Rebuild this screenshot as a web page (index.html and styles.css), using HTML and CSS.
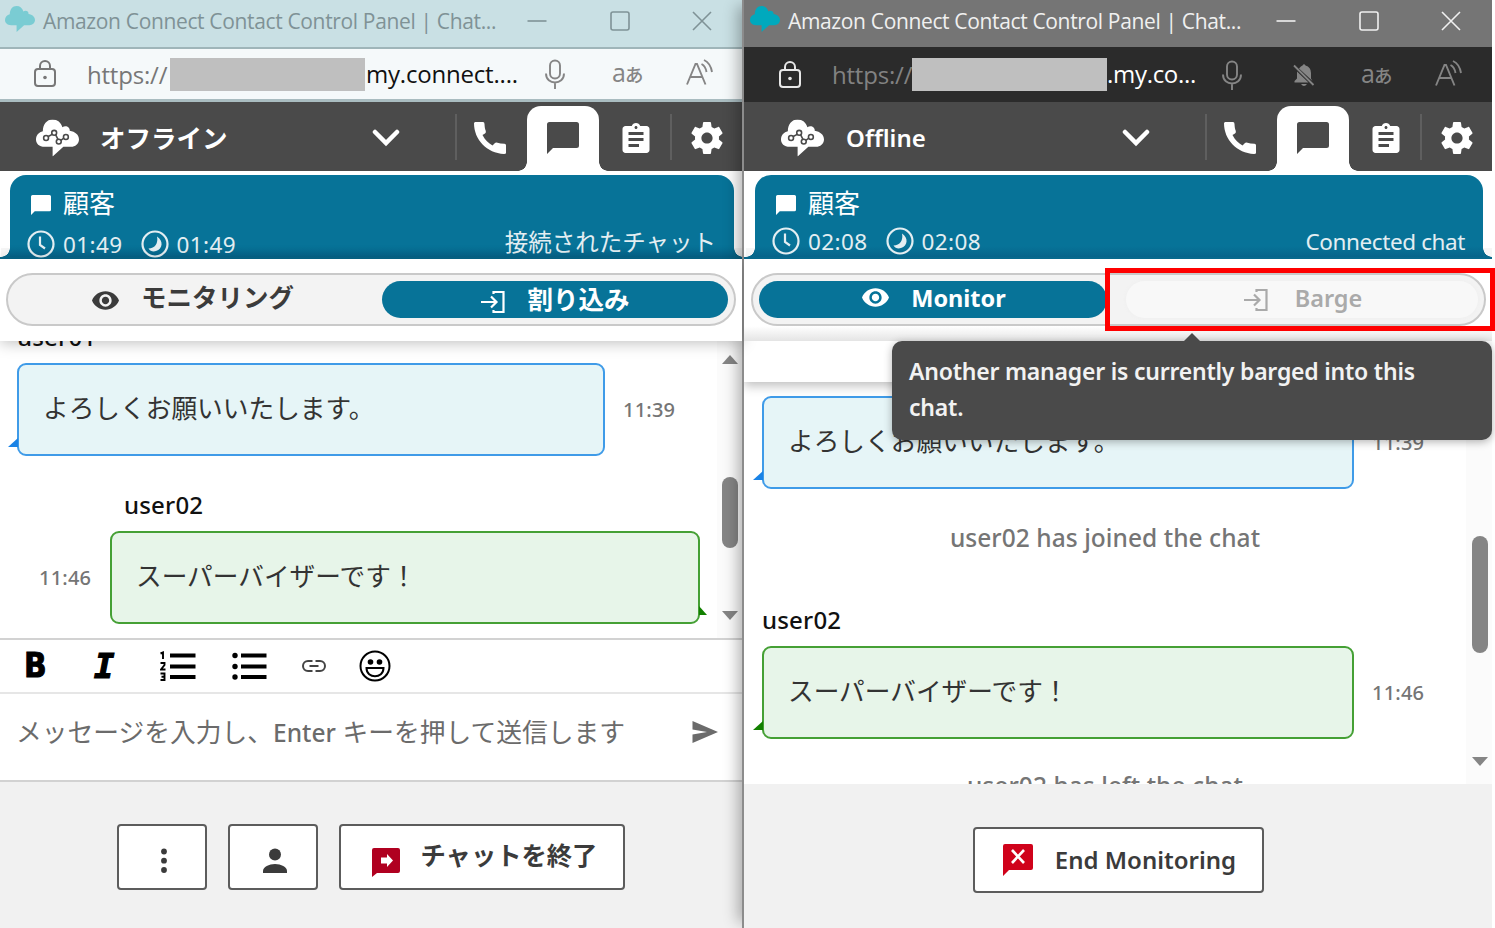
FILE: index.html
```html
<!DOCTYPE html>
<html lang="ja">

<head>
	<meta charset="UTF-8">
	<meta name="viewport" content="width=device-width, initial-scale=1.0">
	<title>Amazon Connect Contact Control Panel</title>
	<link rel="stylesheet" href="styles.css">
</head>

<body>
	<svg class="sprite" width="0" height="0">
		<symbol id="cloud" viewBox="0 0 44 38"><path d="M9 28C3 28 0 24.500 0 20.500C0 16 3 13 7 12C7 5 11 0 17 0C22 0 25.500 3 27 8C30 5.500 35 7.500 34.500 11.500C40 12.500 44 15.500 44 20.500C44 25 40 28 36 28H28L17 38V28Z"/></symbol>
		<symbol id="lock" viewBox="0 0 24 30"><g fill="none" stroke="currentColor" stroke-width="2"><rect x="2" y="10" width="20" height="17" rx="3"/><path d="M7 10V7a5 5 0 0 1 10 0v3"/></g><circle cx="12" cy="18.500" r="1.800"/></symbol>
		<symbol id="mic" viewBox="0 0 22 30"><g fill="none" stroke="currentColor" stroke-width="1.900"><rect x="6" y="1.500" width="10" height="18" rx="5"/><path d="M2 14.500c0 12 18 12 18 0M11 24v6"/></g></symbol>
		<symbol id="belloff" viewBox="0 0 22 24"><path d="M6 5.500Q8 3 9.500 2.500Q11 0 12.500 2.500Q18 4 18 10v5.500L19.500 18zM4 8.500L15.500 19.500H1.500V18L4 15.500zM8 21h6q-3 4-6 0z"/><path d="M1 2.500L20.500 22" stroke="currentColor" stroke-width="1.800"/></symbol>
		<symbol id="read" viewBox="0 0 28 26"><g fill="none" stroke="currentColor" stroke-width="1.900"><path d="M1 25.500L9.500 5h1.500L19.500 25.500M4.500 18H16M15.500 5q4 2 5 8M18 1q6.500 3 8 12"/></g></symbol>
		<symbol id="min" viewBox="0 0 20 20"><path d="M.500 10h19" stroke="currentColor" stroke-width="1.600"/></symbol>
		<symbol id="max" viewBox="0 0 20 20"><rect x="1" y="1" width="18" height="18" rx="2" fill="none" stroke="currentColor" stroke-width="1.600"/></symbol>
		<symbol id="close" viewBox="0 0 20 20"><path d="M1 1l18 18M19 1L1 19" stroke="currentColor" stroke-width="1.600"/></symbol>
		<symbol id="down" viewBox="0 0 28 18"><path d="M3 3l11 11L25 3" fill="none" stroke="currentColor" stroke-width="4.500" stroke-linecap="round"/></symbol>
		<symbol id="phone" viewBox="0 0 32 32"><path d="M1 0H9Q10.500 0 10.500 2C10.600 5 11 7 11.800 9Q12.200 10.500 11 11.500L8.500 13C11 18 14.500 21 18.500 23.500L21 21Q22 20 23.500 20.800Q26 21.600 30.500 21.700Q32 21.700 32 23.200V31Q32 32 30 32C13 31 0 18 0 1Z"/></symbol>
		<symbol id="chat" viewBox="0 0 32 32"><path d="M2.500 0h27Q32 0 32 2.500v21Q32 26 29.500 26H6L0 32V2.500Q0 0 2.500 0z"/></symbol>
		<symbol id="clip" viewBox="3 1 18 20"><path d="M19 3h-4.180C14.400 1.840 13.300 1 12 1c-1.300 0-2.400.840-2.820 2H5c-1.100 0-2 .900-2 2v14c0 1.100.900 2 2 2h14c1.100 0 2-.900 2-2V5c0-1.100-.900-2-2-2zm-7 0c.550 0 1 .450 1 1s-.450 1-1 1-1-.450-1-1 .450-1 1-1zm2 14H7v-2h7v2zm3-4H7v-2h10v2zm0-4H7V7h10v2z"/></symbol>
		<symbol id="gear" viewBox="2 2 20 20"><path d="M19.430 12.980c.040-.320.070-.640.070-.980s-.030-.660-.070-.980l2.110-1.650c.190-.150.240-.420.120-.640l-2-3.460c-.120-.220-.390-.300-.610-.220l-2.490 1c-.520-.400-1.080-.730-1.690-.980l-.380-2.650C14.460 2.180 14.250 2 14 2h-4c-.250 0-.460.180-.490.420l-.380 2.650c-.610.250-1.170.590-1.690.980l-2.490-1c-.230-.090-.490 0-.610.220l-2 3.460c-.130.220-.070.490.120.640l2.110 1.650c-.040.320-.070.650-.070.980s.030.660.070.980l-2.110 1.650c-.190.150-.240.420-.120.640l2 3.460c.120.220.390.300.610.220l2.490-1c.520.400 1.080.730 1.690.980l.380 2.650c.030.240.240.420.490.420h4c.250 0 .460-.180.490-.420l.380-2.650c.610-.250 1.170-.590 1.690-.980l2.490 1c.230.090.490 0 .610-.220l2-3.460c.120-.220.070-.490-.120-.640l-2.110-1.650zM12 15.500c-1.930 0-3.500-1.570-3.500-3.500s1.570-3.500 3.500-3.500 3.500 1.570 3.500 3.500-1.570 3.500-3.500 3.500z"/></symbol>
		<symbol id="clock" viewBox="0 0 28 28"><g fill="none" stroke="currentColor" stroke-width="2.200"><circle cx="14" cy="14" r="12.500"/><path d="M13 6.500V15l5 3.500"/></g></symbol>
		<symbol id="moon" viewBox="0 0 28 28"><circle cx="14" cy="14" r="12.500" fill="none" stroke="currentColor" stroke-width="2.200"/><path d="M16 6.500c6.500 4 6 12.500-1 14.500-3 1-6 0-7.500-2.500C14 18.500 17.500 13 16 6.500z"/></symbol>
		<symbol id="eye" viewBox="1 4.500 22 15"><path d="M12 4.500C7 4.500 2.730 7.610 1 12c1.730 4.390 6 7.500 11 7.500s9.270-3.110 11-7.500c-1.730-4.390-6-7.500-11-7.500zM12 17c-2.760 0-5-2.240-5-5s2.240-5 5-5 5 2.240 5 5-2.240 5-5 5zm0-8c-1.660 0-3 1.340-3 3s1.340 3 3 3 3-1.340 3-3-1.340-3-3-3z"/></symbol>
		<symbol id="barge" viewBox="0 0 24 22"><g fill="none" stroke="currentColor" stroke-width="2.200"><path d="M0 11h15M10 5.500l5.500 5.500-5.500 5.500M12.500 3V1H22.500V21H12.500V19"/></g></symbol>
		<symbol id="ol" viewBox="0 0 36 30"><path d="M10 4.500h25.500M10 15.500h25.500M10 26h25.500" stroke="currentColor" stroke-width="4"/><g fill="none" stroke="currentColor" stroke-width="1.900"><path d="M.500 2.500L3 1.500V8M.500 12h4v2L1 18.500h4.500M.500 22.500h4v6.500H.500M1.500 25.700h3"/></g></symbol>
		<symbol id="ul" viewBox="0 0 36 30"><path d="M9 4.500h25.500M9 15.500h25.500M9 26h25.500" stroke="currentColor" stroke-width="4"/><circle cx="3" cy="4.500" r="2.700"/><circle cx="3" cy="15.500" r="2.700"/><circle cx="3" cy="26" r="2.700"/></symbol>
		<symbol id="link" viewBox="0 0 24 12"><g fill="none" stroke="currentColor" stroke-width="2"><path d="M10.500 1H6a5 5 0 0 0 0 10h4.500M13.500 1H18a5 5 0 0 1 0 10h-4.500M7.500 6h9"/></g></symbol>
		<symbol id="smile" viewBox="0 0 32 32"><circle cx="16" cy="16" r="14.500" fill="none" stroke="currentColor" stroke-width="2"/><circle cx="11.500" cy="12" r="2.800"/><circle cx="20.500" cy="12" r="2.800"/><path d="M7.500 18h17c0 11-17 11-17 0z" fill="none" stroke="currentColor" stroke-width="2"/></symbol>
		<symbol id="send" viewBox="0 0 26 22"><path d="M.500 0L26 11 .500 22V13.500L15 11 .500 8.500z"/></symbol>
		<symbol id="dots" viewBox="0 0 6 26"><circle cx="3" cy="3.500" r="2.900"/><circle cx="3" cy="12.700" r="2.900"/><circle cx="3" cy="22" r="2.900"/></symbol>
		<symbol id="person" viewBox="0 0 24 26"><circle cx="12" cy="6.500" r="6"/><path d="M0 25v-2c0-4 6-7 12-7s12 3 12 7v2z"/></symbol>
		<symbol id="up-arrow" viewBox="0 0 16 9"><path d="M0 9L8 0l8 9z"/></symbol>
		<symbol id="down-arrow" viewBox="0 0 16 9"><path d="M0 0h16L8 9z"/></symbol>
	</svg>

	<div class="screen">
		<!-- supervisor who barged in -->
		<section class="window light">
			<div class="titlebar">
				<svg class="favicon"><use href="#cloud"/></svg>
				<span class="title">Amazon Connect Contact Control Panel | Chat...</span>
				<svg class="win"><use href="#min"/></svg>
				<svg class="win"><use href="#max"/></svg>
				<svg class="win"><use href="#close"/></svg>
			</div>
			<div class="address">
				<svg class="lock"><use href="#lock"/></svg>
				<span class="scheme">https://</span>
				<span class="mask"></span>
				<span class="host">my.connect....</span>
				<div class="tools">
					<svg class="mic"><use href="#mic"/></svg>
					<span class="lang"><span class="latin">a</span>あ</span>
					<svg class="read"><use href="#read"/></svg>
				</div>
			</div>
			<header class="ccp-header">
				<svg class="logo" viewBox="0 0 44 38"><use href="#cloud"/><g fill="none" stroke="#4a4a4a" stroke-width="1.600"><path d="M12.500 17.500l4.500-2.500M20 15.500l2.500 5M25.500 21.500l3-2.500"/><circle cx="10.300" cy="19" r="2.500"/><circle cx="18.600" cy="13.700" r="2.500"/><circle cx="23.300" cy="22.700" r="2.500"/><circle cx="30.600" cy="18" r="2.500"/></g></svg>
				<span class="status jp">オフライン</span>
				<svg class="down"><use href="#down"/></svg>
				<nav class="tabs">
					<a class="tab"><svg class="i32"><use href="#phone"/></svg></a>
					<a class="tab active"><svg class="i32"><use href="#chat"/></svg></a>
					<a class="tab clip"><svg><use href="#clip"/></svg></a>
					<a class="tab gear"><svg class="i32"><use href="#gear"/></svg></a>
				</nav>
			</header>
			<div class="contact">
				<div class="card">
					<div class="customer"><svg><use href="#chat"/></svg>顧客</div>
					<div class="timers">
						<svg><use href="#clock"/></svg><span>01:49</span>
						<svg><use href="#moon"/></svg><span>01:49</span>
						<b class="state">接続されたチャット</b>
					</div>
				</div>
			</div>
			<div class="switchbar">
				<div class="switch">
					<button class="mode"><svg class="eye"><use href="#eye"/></svg>モニタリング</button>
					<button class="mode on"><svg class="enter"><use href="#barge"/></svg>割り込み</button>
				</div>
			</div>
			<div class="chat">
				<div class="messages">
					<div class="name first">user01</div>
					<div class="row">
						<div class="bubble blue">よろしくお願いいたします。</div>
						<span class="time">11:39</span>
					</div>
					<div class="name own">user02</div>
					<div class="row">
						<span class="time">11:46</span>
						<div class="bubble green right">スーパーバイザーです！</div>
					</div>
				</div>
				<div class="scrollbar">
					<svg><use href="#up-arrow"/></svg>
					<i class="thumb"></i>
					<svg><use href="#down-arrow"/></svg>
				</div>
			</div>
			<div class="format">
				<span class="bold">B</span>
				<span class="italic">I</span>
				<svg class="list"><use href="#ol"/></svg>
				<svg class="list"><use href="#ul"/></svg>
				<svg class="link"><use href="#link"/></svg>
				<svg class="smile"><use href="#smile"/></svg>
			</div>
			<div class="composer">
				<span>メッセージを入力し、<span class="key">Enter</span> キーを押して送信します</span>
				<svg><use href="#send"/></svg>
			</div>
			<footer class="actions">
				<button class="btn square"><svg class="dots"><use href="#dots"/></svg></button>
				<button class="btn square"><svg class="person"><use href="#person"/></svg></button>
				<button class="btn end"><svg class="badge" viewBox="0 0 28 29"><path fill="#b00020" d="M2 0h24q2 0 2 2v21q0 2-2 2H5l-5 4V2q0-2 2-2z"/><path fill="#fff" d="M9 9.500h6V6l6 6.500-6 6.500v-3.500H9z"/></svg>チャットを終了</button>
			</footer>
		</section>

		<!-- supervisor who is only monitoring -->
		<section class="window dark">
			<div class="titlebar">
				<svg class="favicon"><use href="#cloud"/></svg>
				<span class="title">Amazon Connect Contact Control Panel | Chat...</span>
				<svg class="win"><use href="#min"/></svg>
				<svg class="win"><use href="#max"/></svg>
				<svg class="win"><use href="#close"/></svg>
			</div>
			<div class="address">
				<svg class="lock"><use href="#lock"/></svg>
				<span class="scheme">https://</span>
				<span class="mask"></span>
				<span class="host">.my.co...</span>
				<div class="tools">
					<svg class="mic"><use href="#mic"/></svg>
					<svg class="bell"><use href="#belloff"/></svg>
					<span class="lang"><span class="latin">a</span>あ</span>
					<svg class="read"><use href="#read"/></svg>
				</div>
			</div>
			<header class="ccp-header">
				<svg class="logo" viewBox="0 0 44 38"><use href="#cloud"/><g fill="none" stroke="#4a4a4a" stroke-width="1.600"><path d="M12.500 17.500l4.500-2.500M20 15.500l2.500 5M25.500 21.500l3-2.500"/><circle cx="10.300" cy="19" r="2.500"/><circle cx="18.600" cy="13.700" r="2.500"/><circle cx="23.300" cy="22.700" r="2.500"/><circle cx="30.600" cy="18" r="2.500"/></g></svg>
				<span class="status">Offline</span>
				<svg class="down"><use href="#down"/></svg>
				<nav class="tabs">
					<a class="tab"><svg class="i32"><use href="#phone"/></svg></a>
					<a class="tab active"><svg class="i32"><use href="#chat"/></svg></a>
					<a class="tab clip"><svg><use href="#clip"/></svg></a>
					<a class="tab gear"><svg class="i32"><use href="#gear"/></svg></a>
				</nav>
			</header>
			<div class="contact">
				<div class="card">
					<div class="customer"><svg><use href="#chat"/></svg>顧客</div>
					<div class="timers">
						<svg><use href="#clock"/></svg><span>02:08</span>
						<svg><use href="#moon"/></svg><span>02:08</span>
						<b class="state">Connected chat</b>
					</div>
				</div>
			</div>
			<div class="switchbar">
				<div class="switch">
					<button class="mode on"><svg class="eye"><use href="#eye"/></svg>Monitor</button>
					<button class="mode off"><svg class="enter"><use href="#barge"/></svg>Barge</button>
				</div>
				<div class="tooltip">Another manager is currently barged into this<br>chat.</div>
				<div class="highlight"></div>
			</div>
			<div class="chat">
				<div class="messages">
					<div class="strip"></div>
					<div class="row">
						<div class="bubble blue">よろしくお願いいたします。</div>
						<span class="time">11:39</span>
					</div>
					<div class="event">user02 has joined the chat</div>
					<div class="name">user02</div>
					<div class="row">
						<div class="bubble green">スーパーバイザーです！</div>
						<span class="time">11:46</span>
					</div>
					<div class="event left">user02 has left the chat</div>
				</div>
				<div class="scrollbar">
					<i class="thumb"></i>
					<svg><use href="#down-arrow"/></svg>
				</div>
			</div>
			<footer class="actions">
				<button class="btn end"><svg class="badge" viewBox="0 0 30 32"><path fill="#d0021b" d="M2 0h26q2 0 2 2v22q0 2-2 2H6l-6 6V2q0-2 2-2z"/><path d="M9 6l12 13M21 6L9 19" stroke="#fff" stroke-width="2.600"/></svg>End Monitoring</button>
			</footer>
		</section>
	</div>
</body>

</html>
```

FILE: styles.css
```css
* {
	box-sizing: border-box;
}

body {
	margin: 0;
	background: #fff;
	font-family: "Noto Sans", "Noto Sans CJK JP", sans-serif;
	overflow: hidden;
}

svg {
	display: block;
	flex: none;
	fill: currentColor;
}

button {
	font-family: inherit;
	margin: 0;
	padding: 0;
	border: none;
}

.sprite {
	position: absolute;
}

.screen {
	display: flex;
	width: 1495px;
	height: 928px;
}

.window {
	display: flex;
	flex-direction: column;
	flex: none;
	height: 928px;
	background: #fff;
	white-space: nowrap;
}

.window.light {
	width: 742px;
}

.window.dark {
	width: 750px;
	border-left: 2px solid #8c8c8c;
	box-shadow: -10px 0 14px -6px rgba(0, 0, 0, 0.3);
	position: relative;
}

/* browser chrome */
.titlebar {
	display: flex;
	align-items: center;
	flex: none;
	height: 49px;
	padding: 0 31px 6px 5px;
	background: #c9e0e4;
	border-bottom: 2px solid #9fb5b9;
	color: #7f9296;
}

.favicon {
	width: 30px;
	height: 26px;
	margin-top: -4px;
	color: #7accd3;
}

.title {
	font-family: "Open Sans", sans-serif;
	font-size: 21px;
	letter-spacing: -0.35px;
	margin-left: 8px;
	width: 484px;
	flex: none;
}

.win {
	width: 20px;
	height: 20px;
	margin-right: 62.500px;
}

.address {
	display: flex;
	align-items: center;
	flex: none;
	height: 53px;
	padding-left: 33px;
	background: #f5f9fa;
	border-bottom: 3px solid #a9bcc0;
	font-family: "Open Sans", sans-serif;
	font-size: 24px;
	color: #777;
}

.lock {
	width: 24px;
	height: 30px;
	margin-right: 30px;
}

.scheme {
	width: 83px;
	flex: none;
	letter-spacing: -0.2px;
}

.mask {
	width: 195px;
	height: 33px;
	flex: none;
	background: #bfbfbf;
}

.host {
	color: #111;
	margin-left: 1px;
	letter-spacing: -0.2px;
	position: relative;
	top: -1px;
}

.tools {
	display: flex;
	align-items: center;
	margin-left: auto;
	padding-right: 28px;
	color: #858585;
}

.mic {
	width: 22px;
	height: 30px;
}

.lang {
	font-family: "Noto Sans CJK JP", sans-serif;
	font-size: 18.500px;
	font-weight: 500;
	margin: 0 43px 0 46px;
	width: 31px;
	display: flex;
	align-items: center;
	line-height: 24px;
	letter-spacing: -1px;
}

.latin {
	font-family: "Open Sans", sans-serif;
	font-size: 25px;
	font-weight: 400;
	margin-top: -4px;
}

.read {
	width: 28px;
	height: 26px;
	margin-top: -4px;
}

.dark .titlebar {
	background: #757575;
	color: #f0f0f0;
	height: 47px;
	padding: 0 31px 5px 6px;
	border-bottom: none;
}

.dark .favicon {
	color: #00a9bd;
}

.dark .title {
	width: 488px;
}

.dark .address {
	background: #2b2b2b;
	height: 55px;
	border-bottom: none;
	padding-left: 34px;
	color: #828282;
}

.dark .lock {
	color: #e8e8e8;
}

.dark .scheme {
	width: 80px;
}

.dark .host {
	color: #fff;
	margin-left: 0;
	letter-spacing: -0.300px;
}

.bell {
	width: 22px;
	height: 24px;
	margin-left: 50px;
}

.dark .tools {
	padding-right: 29px;
}

/* control panel header */
.ccp-header {
	display: flex;
	align-items: center;
	flex: none;
	height: 69px;
	background: #4a4a4a;
	color: #fff;
	padding-left: 36px;
}

.logo {
	width: 43px;
	height: 38px;
	margin-top: 2px;
}

.dark .ccp-header {
	padding-left: 37px;
}

.status {
	font-size: 24px;
	font-weight: 600;
	margin-left: 22px;
	margin-top: 1px;
}

.status.jp {
	font-size: 25.500px;
	font-weight: 700;
	margin-left: 21px;
	margin-top: -1px;
}

.down {
	width: 28px;
	height: 18px;
	margin-left: auto;
	margin-right: 55px;
	margin-top: 3px;
}

.tabs {
	display: flex;
	align-self: stretch;
	align-items: center;
	width: 287px;
	position: relative;
	padding-left: 19px;
}

.tabs::before {
	content: "";
	align-self: center;
	width: 2px;
	height: 46px;
	background: #5f5f5f;
	margin-left: -19px;
	margin-right: 17px;
}

.i32 {
	width: 32px;
	height: 32px;
}

.tab {
	padding-top: 2px;
}

.tab.active {
	align-self: flex-end;
	display: flex;
	justify-content: center;
	width: 72px;
	height: 65px;
	margin-left: 21px;
	padding-top: 16px;
	border-radius: 14px 14px 0 0;
	background: #fff;
	color: #4a4a4a;
	position: relative;
}

.tab.active::before,
.tab.active::after {
	content: "";
	position: absolute;
	bottom: 0;
	left: -9px;
	width: 9px;
	height: 9px;
	background: radial-gradient(circle at 0 0, #4a4a4a 8.500px, #fff 9px);
}

.tab.active::after {
	left: auto;
	right: -9px;
	background: radial-gradient(circle at 100% 0, #4a4a4a 8.500px, #fff 9px);
}

.tab.clip {
	margin-left: 23px;
}

.tab.clip svg {
	width: 28px;
	height: 30px;
}

.tab.gear {
	border-left: 2px solid #5f5f5f;
	margin-left: 20px;
	padding: 8px 0 6px 19px;
}

/* contact card */
.contact {
	flex: none;
	height: 88px;
	padding: 4px 8px 0 10px;
	border-bottom: 2px solid #07698d;
}

.dark .contact {
	padding: 4px 9px 0 11px;
}

.card {
	height: 82px;
	padding: 12px 18px 0 17px;
	border-radius: 16px 16px 0 0;
	background: linear-gradient(#077398 87%, #06648a);
	color: #fff;
	position: relative;
}

.card::before,
.card::after {
	content: "";
	position: absolute;
	bottom: 0;
	left: -9px;
	width: 9px;
	height: 9px;
	background: radial-gradient(circle at 0 0, #f6f6f6 8.500px, #07698d 9px);
}

.card::after {
	left: auto;
	right: -9px;
	background: radial-gradient(circle at 100% 0, #f6f6f6 8.500px, #07698d 9px);
}

.customer {
	display: flex;
	align-items: center;
	height: 32px;
	font-size: 26px;
	line-height: 32px;
}

.customer svg {
	width: 20px;
	height: 20px;
	margin: 4px 12px 0 4px;
}

.timers {
	display: flex;
	align-items: center;
	height: 28px;
	margin-top: 11px;
	font-size: 22.500px;
	color: #e3eef2;
}

.dark .timers {
	margin-top: 8px;
}

.timers svg {
	width: 28px;
	height: 28px;
}

.timers span {
	margin-left: 8px;
	width: 77.500px;
	letter-spacing: 0.4px;
}

.state {
	margin-left: auto;
	font-size: 23.500px;
	font-weight: 400;
}

.dark .state {
	font-size: 22.500px;
	letter-spacing: -0.4px;
}

.light .state {
	position: relative;
	top: -3px;
}

/* monitor / barge switch */
.switchbar {
	flex: none;
	height: 82px;
	padding: 14px 6px 0;
	background: #fff;
	box-shadow: 0 2px 14px rgba(0, 0, 0, 0.25);
	position: relative;
	z-index: 2;
}

.dark .switchbar {
	padding: 14px 6px 0 7px;
	background: linear-gradient(#fff 82%, #e4e4e4);
	box-shadow: none;
}

.switch {
	display: flex;
	justify-content: space-between;
	height: 53px;
	padding: 6px;
	border: 2px solid #c9c9c9;
	border-radius: 27px;
	background: #f3f3f3;
}

.mode {
	display: flex;
	align-items: center;
	justify-content: center;
	width: 346px;
	height: 37px;
	border-radius: 19px;
	background: none;
	color: #3b3b3b;
	font-size: 25.500px;
	font-weight: 700;
	line-height: 36px;
	padding-bottom: 5px;
}

.light .mode {
	padding-left: 12px;
}

.light .mode svg {
	margin-top: 6px;
}

.mode.on {
	background: #077398;
	color: #fff;
}

.light .mode.on {
	padding-left: 1px;
	padding-bottom: 2px;
}

.light .mode.on svg {
	margin-top: 7px;
}

.dark .mode {
	font-size: 23.500px;
	padding: 0 0 3px 2px;
	width: 348px;
}

.dark .mode.on svg {
	margin-top: -1px;
}

.dark .mode.off svg {
	margin-top: 3px;
}

.dark .mode.off {
	width: 352px;
	background: #f8f8f8;
	box-shadow: 0 0 4px #eee;
	color: #aaa;
	font-weight: 600;
}

.eye {
	width: 27px;
	height: 19px;
	margin-right: 22px;
}

.enter {
	width: 24px;
	height: 22px;
	margin-right: 22px;
}

.mode.off .enter {
	margin-right: 27px;
}

.tooltip {
	position: absolute;
	left: 148px;
	top: 82px;
	width: 600px;
	height: 99px;
	padding: 12px 17px;
	border-radius: 10px;
	background: #4a4a4a;
	color: #f2f2f2;
	font-size: 23px;
	font-weight: 600;
	line-height: 36px;
	letter-spacing: -0.22px;
	box-shadow: 0 2px 8px rgba(0, 0, 0, 0.3);
}

.tooltip::before {
	content: "";
	position: absolute;
	left: 292px;
	top: -8px;
	border: 8px solid transparent;
	border-top: none;
	border-bottom-color: #4a4a4a;
}

.highlight {
	position: absolute;
	left: 361px;
	top: 9px;
	width: 390px;
	height: 63px;
	border: 5px solid #f00;
}

/* messages */
.chat {
	display: flex;
	flex: none;
	height: 297px;
	overflow: hidden;
}

.dark .chat {
	height: 443px;
}

.messages {
	width: 717px;
	flex: none;
	padding-left: 17px;
}

.dark .messages {
	width: 722px;
	padding-left: 18px;
}

.strip {
	height: 41px;
	margin-left: -18px;
	margin-bottom: 14px;
	box-shadow: 0 4px 10px rgba(0, 0, 0, 0.25);
}

.name {
	height: 32px;
	font-size: 24px;
	line-height: 32px;
	letter-spacing: 0.2px;
	color: #111;
	font-weight: 500;
	margin-top: 33px;
	margin-bottom: 10px;
}

.name.first {
	margin-top: -20px;
	margin-bottom: 10px;
}

.name.own {
	margin-left: 107px;
}

.row {
	display: flex;
	align-items: center;
}

.bubble {
	position: relative;
	width: 588px;
	height: 93px;
	border: 2px solid #3f9be8;
	border-radius: 9px;
	background: #e6f5f7;
	padding: 0 24px 4px;
	font-size: 25.700px;
	line-height: 87px;
	color: #333;
}

.dark .bubble {
	width: 592px;
}

.bubble.green {
	border-color: #45a035;
	background: #e7f5e9;
}

.bubble::before {
	content: "";
	position: absolute;
	left: -11px;
	bottom: 7px;
	border-style: solid;
	border-width: 0 0 9px 10px;
	border-color: transparent transparent #1a83e6;
}

.bubble.green::before {
	border-color: transparent transparent #128000;
}

.bubble.right {
	width: 590px;
	margin-left: 18px;
}

.bubble.right::before {
	left: auto;
	right: -9px;
	border-width: 9px 0 0 8px;
	border-color: transparent transparent transparent #128000;
}

.time {
	margin-left: 18px;
	width: 53px;
	font-size: 20px;
	font-weight: 500;
	letter-spacing: 0.2px;
	color: #757575;
}

.row .time:first-child {
	margin-left: 22px;
}

.event {
	font-size: 24.500px;
	font-weight: 500;
	line-height: 32px;
	letter-spacing: 0.05px;
	text-align: center;
	color: #757575;
	margin-top: 33px;
	margin-right: 18px;
}

.event.left {
	margin-top: 31px;
}

.dark .name {
	margin-top: 50px;
}

.scrollbar {
	flex: 1;
	display: flex;
	flex-direction: column;
	align-items: center;
	background: #fbfbfb;
	color: #858585;
	padding: 14px 0 18px 1px;
}

.scrollbar svg {
	width: 16px;
	height: 9px;
}

.thumb {
	width: 16px;
	height: 73px;
	margin: 113px 0 63px;
	border-radius: 8px;
	background: #858585;
}

.dark .thumb {
	height: 118px;
	margin: 181px 0 104px;
}

/* composer */
.format {
	display: flex;
	align-items: center;
	flex: none;
	height: 56px;
	padding-left: 24px;
	border-top: 2px solid #d2d2d2;
	border-bottom: 2px solid #e6e6e6;
	color: #000;
}

.bold {
	font-family: "DejaVu Sans", sans-serif;
	font-weight: 700;
	font-size: 33px;
	width: 70px;
	line-height: 40px;
	transform-origin: left;
	transform: scaleX(0.9);
	-webkit-text-stroke: 1px #000;
}

.italic {
	font-family: "DejaVu Sans Mono", monospace;
	font-weight: 700;
	font-style: italic;
	font-size: 34px;
	width: 66px;
	line-height: 40px;
	-webkit-text-stroke: 1.200px #000;
}

.list {
	width: 36px;
	height: 30px;
	margin-right: 36px;
}

.link {
	width: 24px;
	height: 12px;
	margin: 0 33px 0 -2px;
	color: #444;
}

.smile {
	width: 32px;
	height: 32px;
}

.composer {
	display: flex;
	align-items: center;
	justify-content: space-between;
	flex: none;
	height: 88px;
	padding: 0 24px 10px 16px;
	border-bottom: 2px solid #d2d2d2;
	font-size: 25.750px;
	color: #6b6b6b;
}

.composer > span {
	margin-top: -2px;
}

.key {
	font-size: 24.500px;
	font-weight: 500;
}

.composer svg {
	width: 26px;
	height: 22px;
}

/* bottom buttons */
.actions {
	display: flex;
	flex: 1;
	justify-content: center;
	align-items: flex-start;
	gap: 21px;
	padding-top: 42px;
	background: #f1f1f1;
}

.dark .actions {
	padding-top: 43px;
}

.btn {
	display: flex;
	align-items: center;
	justify-content: center;
	height: 66px;
	border: 2px solid #5c5c5c;
	border-radius: 4px;
	background: #fff;
	color: #3b3b3b;
}

.btn.square {
	width: 90px;
	padding: 8px 0 0 4px;
}

.dots {
	width: 6px;
	height: 26px;
}

.person {
	width: 24px;
	height: 26px;
}

.btn.end {
	width: 286px;
	font-size: 25.300px;
	font-weight: 700;
	padding-bottom: 7px;
	padding-left: 5px;
}

.badge {
	width: 28px;
	height: 29px;
	margin: 17px 21px 0 0;
}

.dark .btn.end {
	width: 291px;
	font-size: 24px;
	font-weight: 600;
	padding: 0 0 2px 3px;
}

.dark .badge {
	width: 30px;
	height: 32px;
	margin: 2px 22px 0 0;
}
```
